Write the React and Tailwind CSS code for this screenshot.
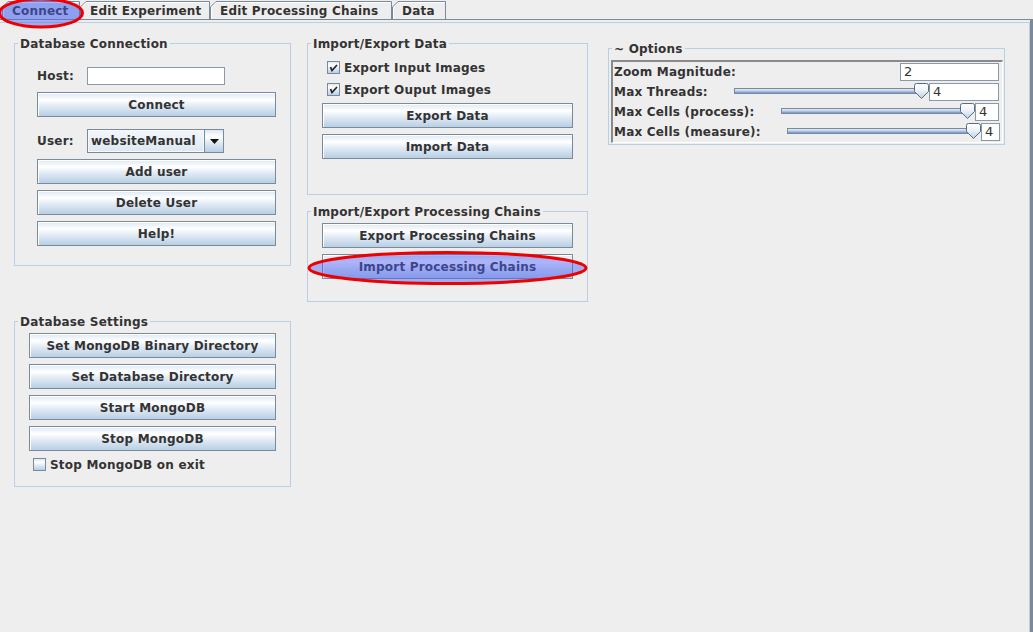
import React from "react";

const grad = "bg-[linear-gradient(to_bottom,#dde8f3_0%,#ffffff_30%,#dde8f3_60%,#b8cfe5_100%)]";

const Tab = ({ label, w, wClass, selected }) => (
  <div className={`relative h-[18px] flex items-center pl-[10px] pt-[1px] font-bold ${wClass}`}>
    <svg className="absolute left-0 top-0" width={w} height="18">
      <path d={`M0.5 18 V6 L6 0.5 H${w - 0.5} V18`} fill={selected ? "#c8daec" : "#eeeeee"} stroke="#7a8a99" />
      <path d={`M1.5 18 V6.5 L6.5 1.5 H${w - 1.5}`} fill="none" stroke="#ffffff" />
    </svg>
    <span className="relative">{label}</span>
  </div>
);

const Button = ({ children, className = "" }) => (
  <div className={`h-[25px] flex items-center justify-center border border-[#7a8a99] shadow-[inset_1px_1px_0_#ffffff] font-bold ${grad} ${className}`}>
    {children}
  </div>
);

const CheckBox = ({ checked, label, className = "" }) => (
  <div className={`flex items-center h-[13px] ${className}`}>
    <div className={`w-[13px] h-[13px] border border-[#7a8a99] flex items-center justify-center ${grad}`}>
      {checked && (
        <svg width="9" height="9" viewBox="0 0 9 9">
          <path d="M1.5 4 L3 7.5 L8 2" fill="none" stroke="#222" strokeWidth="1.7" />
        </svg>
      )}
    </div>
    <span className="ml-[4px] font-bold">{label}</span>
  </div>
);

const Field = ({ value = "", className = "" }) => (
  <div className={`h-[18px] bg-white border border-[#8a99a8] pl-[3px] flex items-center text-[13px] font-normal ${className}`}>
    {value}
  </div>
);

const Slider = ({ className = "" }) => (
  <div className={`relative flex-1 h-[16px] self-start mt-[1px] ${className}`}>
    <div className="absolute left-0 right-[7px] top-[5px] h-[6px] border border-[#7a8a99] bg-[linear-gradient(to_bottom,#e6eef8,#b3c8e6_55%,#6f8fc8)]" />
    <svg className="absolute right-0 top-0" width="15" height="16" viewBox="0 0 15 16">
      <defs>
        <linearGradient id="thumb" x1="0" y1="0" x2="0" y2="1">
          <stop offset="0" stopColor="#ffffff" />
          <stop offset="0.45" stopColor="#eef3f9" />
          <stop offset="1" stopColor="#b8cfe5" />
        </linearGradient>
      </defs>
      <path d="M0.5 2.5 Q0.5 0.5 2.5 0.5 H12.5 Q14.5 0.5 14.5 2.5 V8.5 L7.5 15.5 L0.5 8.5 Z" fill="url(#thumb)" stroke="#5b6b7c" />
    </svg>
  </div>
);

const Panel = ({ title, className = "", inner = "", children }) => (
  <fieldset className={`border border-[#b8cfe5] ${className}`}>
    <legend className="ml-[3px] px-[2px] pt-[1px] font-bold leading-[14px]">{title}</legend>
    <div className={inner}>{children}</div>
  </fieldset>
);

export default function App() {
  return (
    <div className="relative w-[1033px] h-[632px] overflow-hidden bg-[#eeeeee] text-[12px] tracking-[0.2px] text-[#333333] font-['DejaVu_Sans',sans-serif]">
      {/* tab strip */}
      <div className="h-[19px] pt-[1px] pl-[2px] flex">
        <Tab label="Connect" w={78} wClass="w-[78px]" selected />
        <Tab label="Edit Experiment" w={130} wClass="w-[130px]" />
        <Tab label="Edit Processing Chains" w={182} wClass="w-[182px]" />
        <Tab label="Data" w={54} wClass="w-[54px]" />
      </div>

      <div className="h-[613px] border-t border-r-[3px] border-[#7a8a99]">
        <div className="h-[611px] mt-[2px] border-t border-r border-[#b8cfe5] pt-[13px] pl-[14px] flex items-start">
          {/* column 1 */}
          <div className="w-[277px] flex flex-col">
            <Panel title="Database Connection" inner="pl-[22px] pr-[14px] pb-[19px]">
              <div className="mt-[16px] h-[18px] flex items-center">
                <span className="w-[50px] font-bold">Host:</span>
                <Field className="w-[138px]" />
              </div>
              <Button className="mt-[7px]">Connect</Button>
              <div className="mt-[12px] h-[24px] flex items-center">
                <span className="w-[50px] font-bold">User:</span>
                <div className="w-[137px] h-[24px] flex border border-[#7a8a99]">
                  <div className="flex-1 flex items-center pl-[2px] font-bold border border-[#f7f9fc] bg-[linear-gradient(to_bottom,#f2f6fb,#dfe8f2)]">
                    websiteManual
                  </div>
                  <div className={`w-[19px] flex items-center justify-center border-l border-[#7a8a99] ${grad}`}>
                    <svg width="9" height="5" viewBox="0 0 9 5">
                      <path d="M0 0 H9 L4.5 5 Z" fill="#111" />
                    </svg>
                  </div>
                </div>
              </div>
              <Button className="mt-[6px]">Add user</Button>
              <Button className="mt-[6px]">Delete User</Button>
              <Button className="mt-[6px]">Help!</Button>
            </Panel>

            <Panel title="Database Settings" className="mt-[48px]" inner="px-[14px] pb-[15px]">
              <Button className="mt-[4px]">Set MongoDB Binary Directory</Button>
              <Button className="mt-[6px]">Set Database Directory</Button>
              <Button className="mt-[6px]">Start MongoDB</Button>
              <Button className="mt-[6px]">Stop MongoDB</Button>
              <CheckBox label="Stop MongoDB on exit" className="mt-[7px] ml-[4px]" />
            </Panel>
          </div>

          {/* column 2 */}
          <div className="w-[281px] ml-[16px] flex flex-col">
            <Panel title="Import/Export Data" inner="px-[14px] pb-[35px]">
              <CheckBox checked label="Export Input Images" className="mt-[10px] ml-[5px]" />
              <CheckBox checked label="Export Ouput Images" className="mt-[9px] ml-[5px]" />
              <Button className="mt-[7px]">Export Data</Button>
              <Button className="mt-[6px]">Import Data</Button>
            </Panel>

            <Panel title="Import/Export Processing Chains" className="mt-[9px]" inner="px-[14px] pb-[22px]">
              <Button className="mt-[4px]">Export Processing Chains</Button>
              <Button className="mt-[6px]">Import Processing Chains</Button>
            </Panel>
          </div>

          {/* column 3 */}
          <div className="w-[397px] ml-[20px] mt-[5px]">
            <Panel title="~ Options" inner="pl-[2px] pr-[1px] pb-[1px]">
              <div className="mt-[4px] border-t-2 border-l-2 border-b border-r border-t-[#8a8a8a] border-l-[#8a8a8a] border-b-[#ffffff] border-r-[#ffffff] pl-[1px] pr-[3px] font-bold">
                <div className="h-[20px] flex items-center">
                  <span>Zoom Magnitude:</span>
                  <div className="flex-1" />
                  <Field value="2" className="w-[99px]" />
                </div>
                <div className="h-[20px] flex items-center">
                  <span>Max Threads:</span>
                  <Slider className="ml-[26px]" />
                  <Field value="4" className="w-[70px]" />
                </div>
                <div className="h-[20px] flex items-center">
                  <span>Max Cells (process):</span>
                  <Slider className="ml-[26px]" />
                  <Field value="4" className="w-[24px]" />
                </div>
                <div className="h-[20px] flex items-center">
                  <span>Max Cells (measure):</span>
                  <Slider className="ml-[26px]" />
                  <Field value="4" className="w-[19px] mr-[-1px]" />
                </div>
              </div>
            </Panel>
          </div>
        </div>
      </div>

      {/* red annotation marks */}
      <svg className="absolute left-0 top-0 pointer-events-none" width="1033" height="632">
        <ellipse cx="41" cy="13" rx="41.5" ry="14" fill="rgba(74,91,242,0.45)" stroke="#ee0000" strokeWidth="3" />
        <ellipse cx="447.5" cy="268" rx="138.5" ry="15.5" fill="rgba(74,91,242,0.45)" stroke="#ee0000" strokeWidth="3" />
      </svg>
    </div>
  );
}
